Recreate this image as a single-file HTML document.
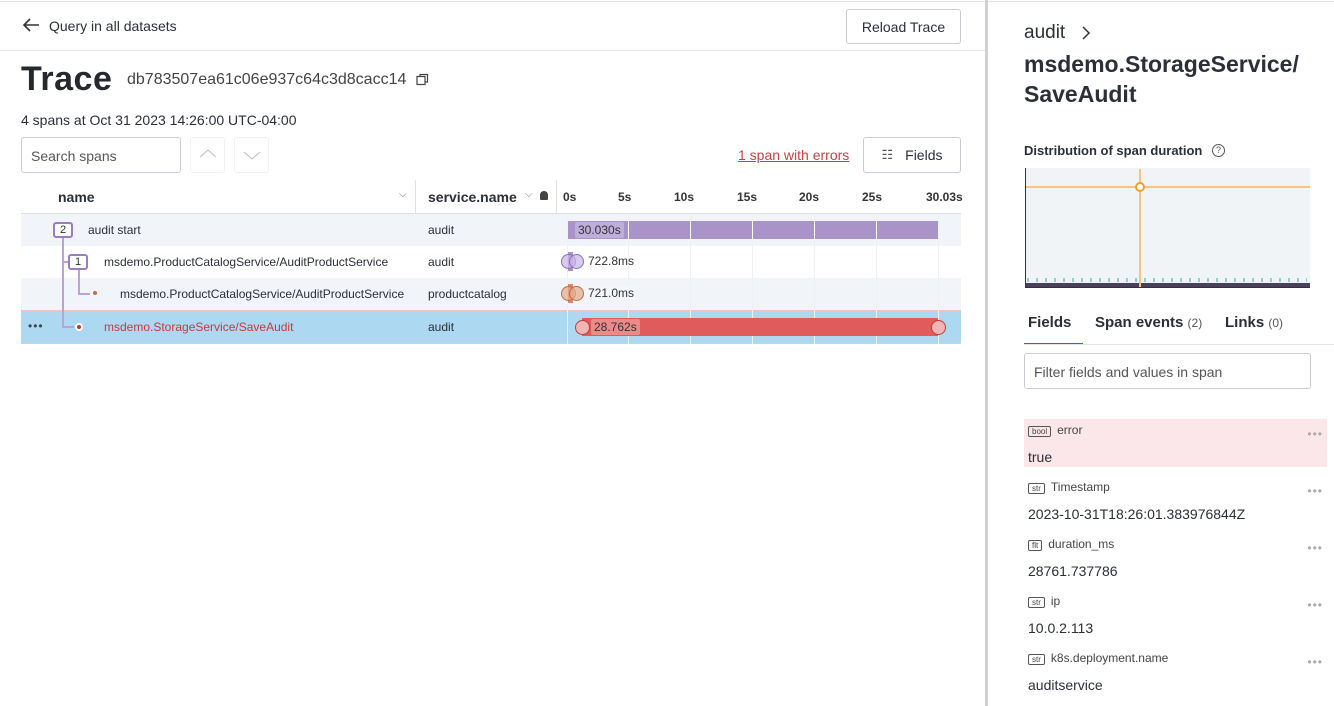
<!DOCTYPE html>
<html><head><meta charset="utf-8"><style>
*{box-sizing:border-box;margin:0;padding:0}
body{width:1334px;height:706px;overflow:hidden;background:#fff;font-family:"Liberation Sans",sans-serif;color:#2b2f36;position:relative}
.a{position:absolute;white-space:nowrap}
.btn{position:absolute;border:1px solid #c8ccd2;border-radius:3px;background:#fff;font-size:14px;display:flex;align-items:center;justify-content:center;color:#2b2f36}
.row{position:absolute;left:21px;width:940px;height:32px;font-size:12px}
.tag{display:inline-block;font-size:8px;border:1px solid #555;border-radius:2px;padding:0 3px;line-height:9px;margin-right:6px;color:#444}
.fld{position:absolute;left:1024px;width:303px;height:48px}
.fld .k{position:absolute;left:4px;top:4px;font-size:12px;color:#444}
.fld .v{position:absolute;left:4px;top:30px;font-size:14px;color:#2b2f36}
.fld .d{position:absolute;right:4px;top:8px;font-size:12px;color:#aaa;letter-spacing:1px}
</style></head><body>
<div class="a" style="left:0;top:1px;width:1334px;height:1px;background:#e2e5e9"></div>
<div class="a" style="left:985px;top:0;width:3px;height:706px;background:#cfd1d4"></div>

<svg class="a" style="left:22px;top:18px" width="18" height="14"><path d="M8 1 L2 7 L8 13 M2 7 H17" stroke="#333" stroke-width="1.6" fill="none"/></svg>
<div class="a" style="left:49px;top:18px;font-size:14px">Query in all datasets</div>
<div class="btn" style="left:846px;top:9px;width:115px;height:35px">Reload Trace</div>
<div class="a" style="left:0;top:50px;width:985px;height:1px;background:#e2e5e9"></div>

<div class="a" style="left:21px;top:60px;font-size:34px;font-weight:bold;color:#25282d;letter-spacing:0.5px">Trace</div>
<div class="a" style="left:127px;top:71px;font-size:16px;color:#444">db783507ea61c06e937c64c3d8cacc14</div>
<svg class="a" style="left:416px;top:73px" width="13" height="13"><rect x="1" y="3.5" width="8" height="8" fill="none" stroke="#444" stroke-width="1.2"/><path d="M4 3.5V1.5H11.5V9H9" fill="none" stroke="#444" stroke-width="1.2"/></svg>
<div class="a" style="left:21px;top:112px;font-size:14px">4 spans at Oct 31 2023 14:26:00 UTC-04:00</div>

<div class="a" style="left:21px;top:137px;width:160px;height:36px;border:1px solid #c8ccd2;border-radius:3px;font-size:14px;color:#555;padding:10px 9px">Search spans</div>
<div class="a" style="left:190px;top:137px;width:35px;height:36px;border:1px solid #f0f1f3;border-radius:3px"></div>
<div class="a" style="left:234px;top:137px;width:35px;height:36px;border:1px solid #f0f1f3;border-radius:3px"></div>
<svg class="a" style="left:199px;top:149px" width="18" height="10"><path d="M1 8 L9 1 L17 8" stroke="#bbb" fill="none"/></svg>
<svg class="a" style="left:243px;top:151px" width="18" height="10"><path d="M1 1 L9 8 L17 1" stroke="#bbb" fill="none"/></svg>

<div class="a" style="left:738px;top:147px;font-size:14px;color:#c9413f;text-decoration:underline">1 span with errors</div>
<div class="btn" style="left:863px;top:137px;width:98px;height:36px"><span style="font-size:13px;color:#555;margin-right:12px">☷</span>Fields</div>

<div class="a" style="left:21px;top:213px;width:940px;height:1px;background:#dde1e6"></div>
<div class="a" style="left:415px;top:180px;width:1px;height:164px;background:#dde1e6"></div>
<div class="a" style="left:556px;top:180px;width:1px;height:34px;background:#dde1e6"></div>
<div class="a" style="left:58px;top:189px;font-size:14px;font-weight:bold;color:#2b2f36">name</div>
<div class="a" style="left:399px;top:189px;font-size:10px;color:#777">⌵</div>
<div class="a" style="left:428px;top:189px;font-size:14px;font-weight:bold;color:#2b2f36">service.name</div>
<div class="a" style="left:525px;top:189px;font-size:10px;color:#777">⌵</div>
<div class="a" style="left:540px;top:191px;width:8px;height:9px;background:#444;border-radius:4px 4px 1px 1px"></div>
<div class="a" style="left:563px;top:190px;font-size:12px;font-weight:bold;color:#333">0s</div>
<div class="a" style="left:618px;top:190px;font-size:12px;font-weight:bold;color:#333">5s</div>
<div class="a" style="left:674px;top:190px;font-size:12px;font-weight:bold;color:#333">10s</div>
<div class="a" style="left:737px;top:190px;font-size:12px;font-weight:bold;color:#333">15s</div>
<div class="a" style="left:799px;top:190px;font-size:12px;font-weight:bold;color:#333">20s</div>
<div class="a" style="left:862px;top:190px;font-size:12px;font-weight:bold;color:#333">25s</div>
<div class="a" style="left:926px;top:190px;font-size:12px;font-weight:bold;color:#333">30.03s</div>

<div class="row" style="top:214px;background:#f1f4f8"></div>
<div class="row" style="top:246px;background:#fff"></div>
<div class="row" style="top:278px;background:#f1f4f8"></div>
<div class="row" style="top:310px;height:34px;background:#acd8f2;border-top:1px solid #f2c2c6;border-bottom:1px solid #f2c2c6"></div>
<div class="a" style="left:567px;top:214px;width:1px;height:130px;background:#eef0f3"></div>
<div class="a" style="left:628px;top:214px;width:1px;height:130px;background:#eef0f3"></div>
<div class="a" style="left:690px;top:214px;width:1px;height:130px;background:#eef0f3"></div>
<div class="a" style="left:752px;top:214px;width:1px;height:130px;background:#eef0f3"></div>
<div class="a" style="left:814px;top:214px;width:1px;height:130px;background:#eef0f3"></div>
<div class="a" style="left:876px;top:214px;width:1px;height:130px;background:#eef0f3"></div>
<div class="a" style="left:938px;top:214px;width:1px;height:130px;background:#eef0f3"></div>

<div class="a" style="left:62px;top:236px;width:2px;height:91px;background:#b9a3d6"></div>
<div class="a" style="left:62px;top:261px;width:6px;height:2px;background:#b9a3d6"></div>
<div class="a" style="left:62px;top:326px;width:12px;height:2px;background:#b9a3d6"></div>
<div class="a" style="left:78px;top:268px;width:2px;height:27px;background:#b9a3d6"></div>
<div class="a" style="left:78px;top:293px;width:12px;height:2px;background:#b9a3d6"></div>
<div class="a" style="left:53px;top:222px;width:20px;height:16px;border:2px solid #9a7cc5;border-radius:3px;background:#fff;font-size:11px;text-align:center;line-height:12px">2</div>
<div class="a" style="left:68px;top:254px;width:20px;height:16px;border:2px solid #9a7cc5;border-radius:3px;background:#fff;font-size:11px;text-align:center;line-height:12px">1</div>
<div class="a" style="left:93px;top:291px;width:4px;height:4px;border-radius:2px;background:#d2693a"></div>
<div class="a" style="left:75px;top:323px;width:8px;height:8px;border-radius:4px;background:#fff"></div>
<div class="a" style="left:77px;top:325px;width:4px;height:4px;border-radius:2px;background:#c0392b"></div>
<div class="a" style="left:28px;top:319px;font-size:12px;color:#444;letter-spacing:1px">•••</div>

<div class="a" style="left:88px;top:223px;font-size:12px">audit start</div>
<div class="a" style="left:104px;top:255px;font-size:12px">msdemo.ProductCatalogService/AuditProductService</div>
<div class="a" style="left:120px;top:287px;font-size:12px">msdemo.ProductCatalogService/AuditProductService</div>
<div class="a" style="left:104px;top:320px;font-size:12px;color:#c43b3b">msdemo.StorageService/SaveAudit</div>
<div class="a" style="left:428px;top:223px;font-size:12px">audit</div>
<div class="a" style="left:428px;top:255px;font-size:12px">audit</div>
<div class="a" style="left:428px;top:287px;font-size:12px">productcatalog</div>
<div class="a" style="left:428px;top:320px;font-size:12px">audit</div>

<div class="a" style="left:568px;top:221px;width:370px;height:18px;background:#a993c9"></div>
<div class="a" style="left:628px;top:221px;width:1px;height:18px;background:#fff"></div>
<div class="a" style="left:690px;top:221px;width:1px;height:18px;background:#fff"></div>
<div class="a" style="left:752px;top:221px;width:1px;height:18px;background:#fff"></div>
<div class="a" style="left:814px;top:221px;width:1px;height:18px;background:#fff"></div>
<div class="a" style="left:876px;top:221px;width:1px;height:18px;background:#fff"></div>
<div class="a" style="left:575px;top:222px;padding:1px 3px;background:#bfaed9;border-radius:2px;font-size:12px;color:#333">30.030s</div>

<div class="a" style="left:568px;top:252px;width:5px;height:19px;background:#a993c9"></div>
<div class="a" style="left:561px;top:254px;width:15px;height:15px;border-radius:50%;border:1px solid #8a6cbf;background:rgba(200,180,230,.7)"></div>
<div class="a" style="left:569px;top:254px;width:15px;height:15px;border-radius:50%;border:1px solid #8a6cbf;background:rgba(200,180,230,.7)"></div>
<div class="a" style="left:588px;top:254px;font-size:12px;color:#333">722.8ms</div>

<div class="a" style="left:568px;top:284px;width:5px;height:19px;background:#d98a6a"></div>
<div class="a" style="left:561px;top:286px;width:15px;height:15px;border-radius:50%;border:1px solid #c06a45;background:rgba(230,170,140,.7)"></div>
<div class="a" style="left:569px;top:286px;width:15px;height:15px;border-radius:50%;border:1px solid #c06a45;background:rgba(230,170,140,.7)"></div>
<div class="a" style="left:586px;top:286px;padding:0 2px;background:#f4f6f9;font-size:12px;color:#333">721.0ms</div>

<div class="a" style="left:582px;top:318px;width:356px;height:18px;background:#e05c5c"></div>
<div class="a" style="left:575px;top:320px;width:15px;height:15px;border-radius:50%;border:1px solid #c53a3a;background:#f2b5b5"></div>
<div class="a" style="left:931px;top:320px;width:15px;height:15px;border-radius:50%;border:1px solid #c53a3a;background:#f2b5b5"></div>
<div class="a" style="left:591px;top:319px;padding:1px 3px;background:#ec8a8a;border-radius:2px;font-size:12px;color:#333">28.762s</div>

<div class="a" style="left:1024px;top:22px;font-size:19px;color:#2b2f36">audit</div>
<svg class="a" style="left:1081px;top:26px" width="10" height="14"><path d="M2 1 L8 7 L2 13" stroke="#333" stroke-width="1.5" fill="none"/></svg>
<div class="a" style="left:1024px;top:49px;font-size:23px;font-weight:bold;color:#2b2f36;line-height:30px">msdemo.StorageService/<br>SaveAudit</div>
<div class="a" style="left:1024px;top:143px;font-size:13px;font-weight:bold;color:#2b2f36">Distribution of span duration</div>
<div class="a" style="left:1212px;top:144px;width:13px;height:13px;border:1px solid #555;border-radius:50%;font-size:9px;text-align:center;line-height:11px;color:#555">?</div>

<div class="a" style="left:1025px;top:168px;width:285px;height:120px;background:#f1f4f6;border-left:1px solid #333;border-bottom:1px solid #333"></div>
<div class="a" style="left:1026px;top:283px;width:284px;height:4px;background:#4a3f5c"></div>
<div class="a" style="left:1026px;top:186px;width:284px;height:2px;background:#f7c57e"></div>
<div class="a" style="left:1139px;top:169px;width:2px;height:118px;background:#f7c57e"></div>
<div class="a" style="left:1135px;top:182px;width:10px;height:10px;border:2px solid #f0a030;border-radius:50%;background:#fff"></div>
<div class="a" style="left:1027px;top:278px;width:280px;height:4px;background:repeating-linear-gradient(90deg,#8fcfcf 0 2px,transparent 2px 9px)"></div>

<div class="a" style="left:1028px;top:314px;font-size:15px;font-weight:bold;color:#2b2f36">Fields</div>
<div class="a" style="left:1024px;top:343px;width:59px;height:2px;background:#2a6fb0"></div>
<div class="a" style="left:1024px;top:344px;width:310px;height:1px;background:#e2e5e9"></div>
<div class="a" style="left:1095px;top:314px;font-size:15px;font-weight:bold;color:#2b2f36">Span events <span style="font-weight:normal;font-size:12px;color:#555">(2)</span></div>
<div class="a" style="left:1225px;top:314px;font-size:15px;font-weight:bold;color:#2b2f36">Links <span style="font-weight:normal;font-size:12px;color:#555">(0)</span></div>
<div class="a" style="left:1024px;top:353px;width:287px;height:36px;border:1px solid #c8ccd2;border-radius:3px;font-size:14px;color:#555;padding:10px 9px">Filter fields and values in span</div>

<div class="fld" style="top:419px;background:#fbe7ea"><div class="k"><span class="tag">bool</span>error</div><div class="v">true</div><div class="d">•••</div></div>
<div class="fld" style="top:476px"><div class="k"><span class="tag">str</span>Timestamp</div><div class="v">2023-10-31T18:26:01.383976844Z</div><div class="d">•••</div></div>
<div class="fld" style="top:533px"><div class="k"><span class="tag">flt</span>duration_ms</div><div class="v">28761.737786</div><div class="d">•••</div></div>
<div class="fld" style="top:590px"><div class="k"><span class="tag">str</span>ip</div><div class="v">10.0.2.113</div><div class="d">•••</div></div>
<div class="fld" style="top:647px"><div class="k"><span class="tag">str</span>k8s.deployment.name</div><div class="v">auditservice</div><div class="d">•••</div></div>
</body></html>
